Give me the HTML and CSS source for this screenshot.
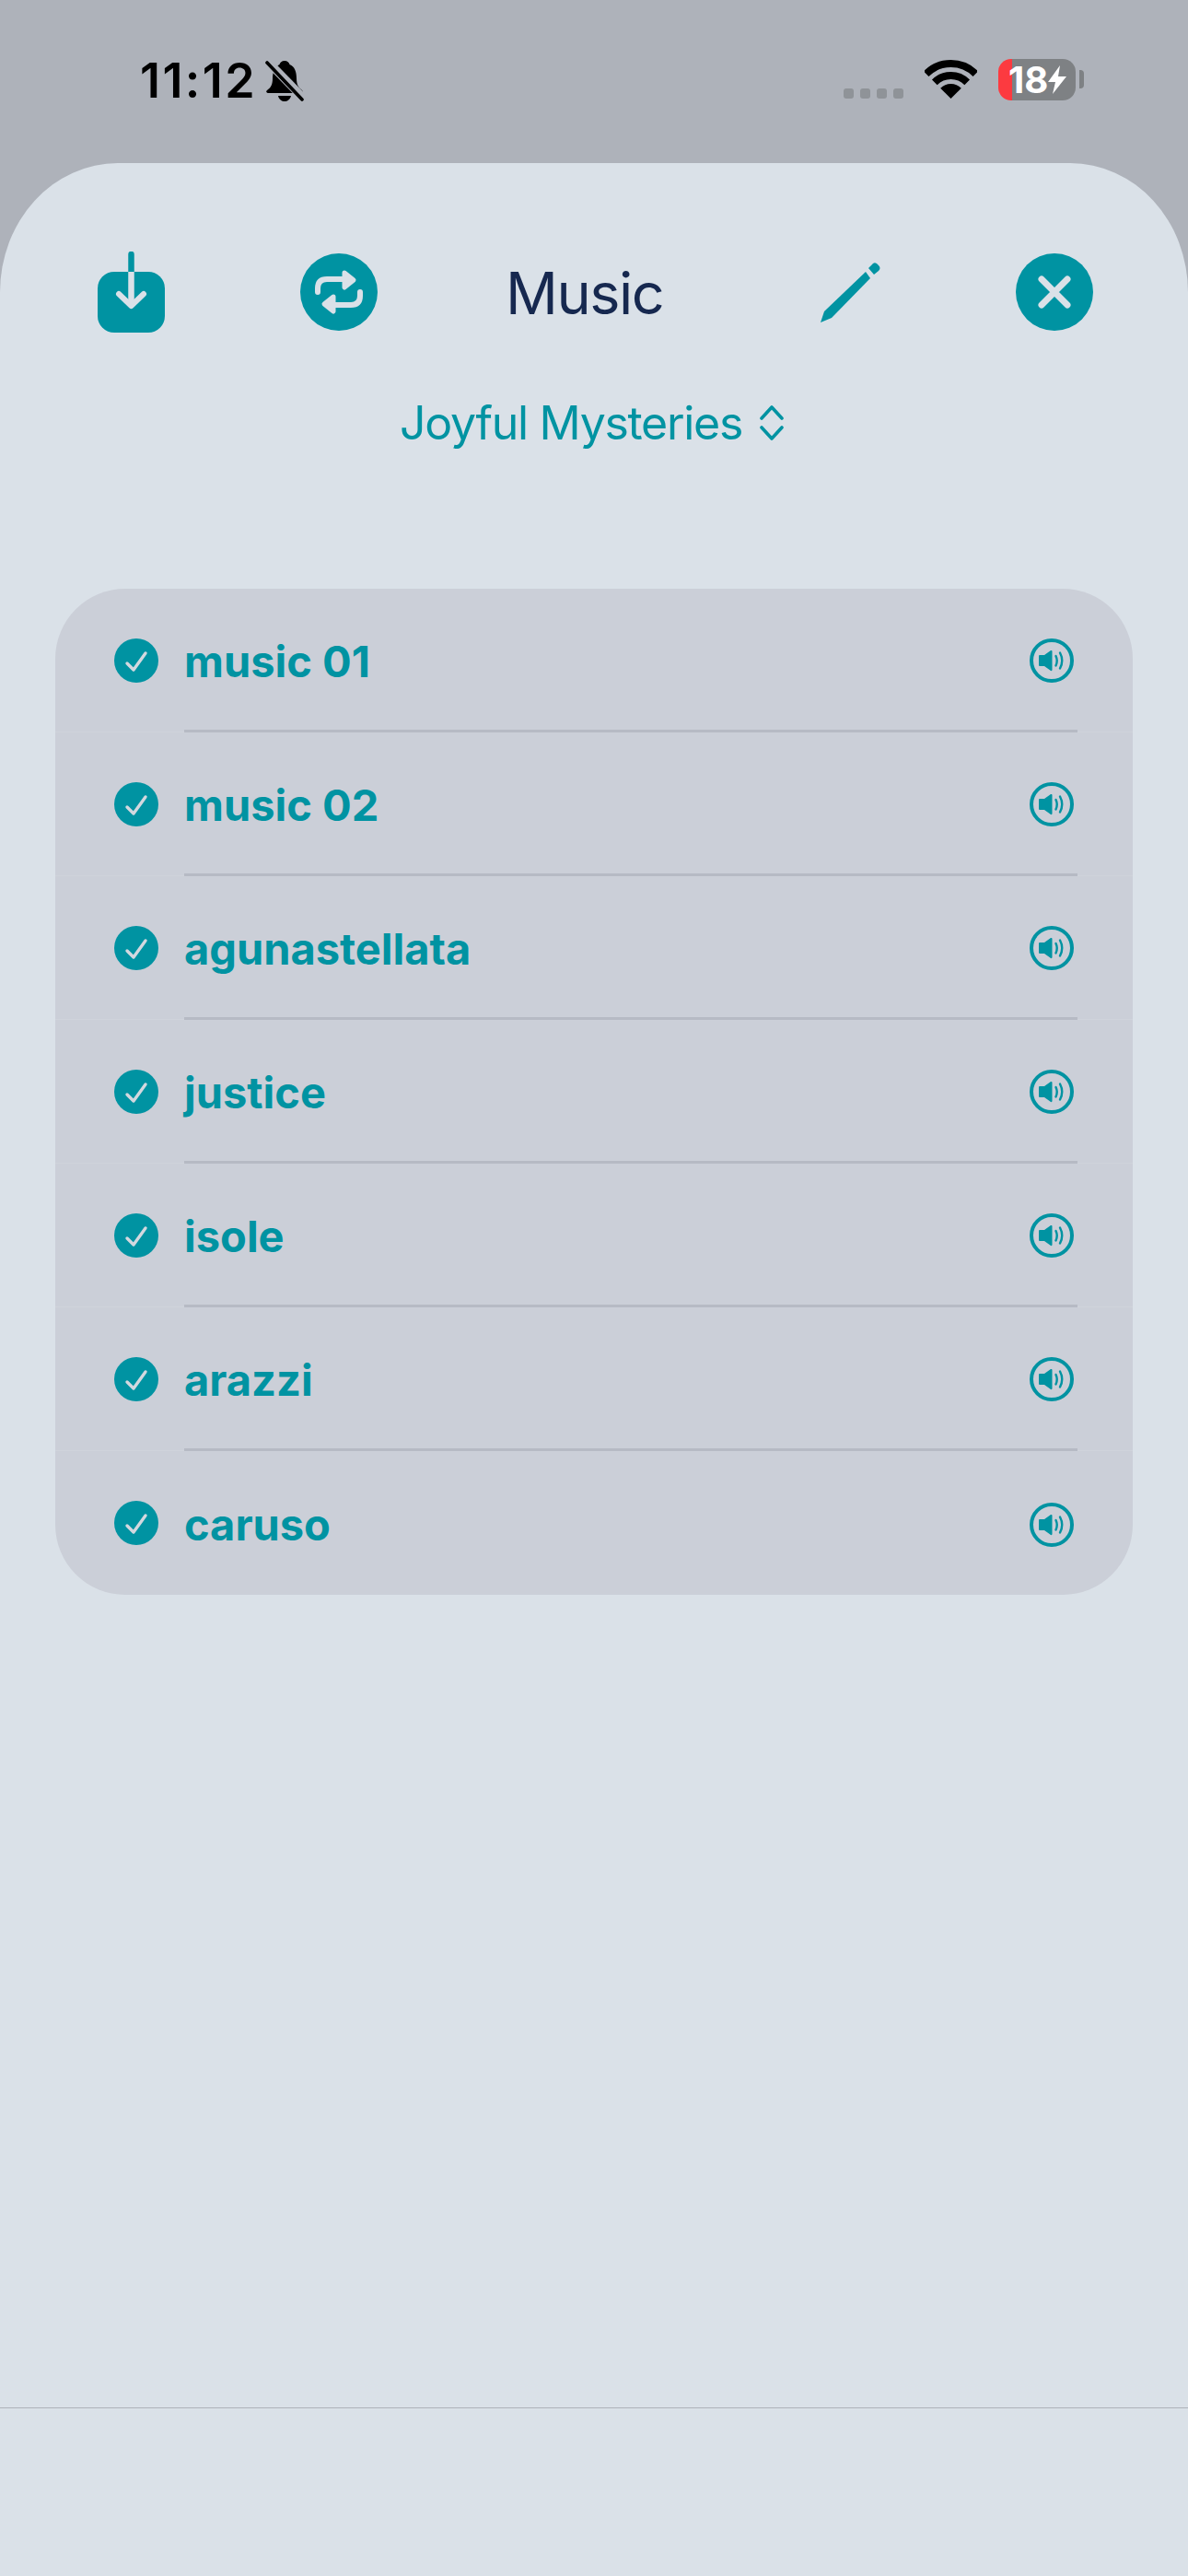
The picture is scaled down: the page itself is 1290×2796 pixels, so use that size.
FILE: index.html
```html
<!DOCTYPE html>
<html>
<head>
	<meta charset="utf-8">
	<title>Music</title>
	<link rel="stylesheet" href="styles.css">
</head>
<body>

<svg class="defs" width="0" height="0">
	<symbol id="check" viewBox="0 0 48 48">
		<circle cx="24" cy="24" r="24" fill="#0093a2"/>
		<path d="M14 27 L21 34 L34 16" fill="none" stroke="#d3d8df" stroke-width="3.4" stroke-linecap="round" stroke-linejoin="round"/>
	</symbol>
	<symbol id="speaker" viewBox="0 0 48 48">
		<circle cx="24" cy="24" r="22" fill="none" stroke="#0093a2" stroke-width="4"/>
		<path d="M11 18 H16 L23 13 Q24.5 12.5 24.5 14 V34 Q24.5 35.5 23 35 L16 30 H11 Q10 30 10 29 V19 Q10 18 11 18 Z" fill="#0093a2"/>
		<path d="M28.5 19 Q31 24 28.5 29.5" fill="none" stroke="#0093a2" stroke-width="2.4" stroke-linecap="round"/>
		<path d="M33 15.5 Q37.5 24 33 32.5" fill="none" stroke="#0093a2" stroke-width="2.4" stroke-linecap="round"/>
	</symbol>
</svg>

<div class="status">
	<span class="time">11:12</span>
	<svg class="bell" width="42" height="46" viewBox="0 0 42 46">
		<path d="M21 1 C24 1 26 3 26.5 5 C32 7 34 13 34 20 C34 27 36 30 40 33 C41.5 35 41 36 38 36 L4 36 C1 36 .5 34 2 33 C6 30 8 27 8 20 C8 13 11 7 15.5 5 C16 3 18 1 21 1 Z"/>
		<path d="M14 39 H28 C27 43 24 45 21 45 C18 45 15 43 14 39 Z"/>
		<line x1="2" y1="1" x2="41" y2="41" stroke="#aeb2ba" stroke-width="9"/>
		<line x1="2" y1="3" x2="40" y2="43" stroke="#000" stroke-width="3.6" stroke-linecap="round"/>
	</svg>
	<div class="status-right">
		<div class="signal"><i></i><i></i><i></i><i></i></div>
		<svg class="wifi" width="57" height="42" viewBox="0 0 57 42">
			<path d="M1.63 15.13 A38 38 0 0 1 55.37 15.13" fill="none" stroke="#000" stroke-width="8"/>
			<path d="M10.82 24.32 A25 25 0 0 1 46.18 24.32" fill="none" stroke="#000" stroke-width="8"/>
			<path d="M28.5 42 L17.2 30.7 A16 16 0 0 1 39.8 30.7 Z"/>
		</svg>
		<div class="battery">
			<span>18</span>
			<svg width="20" height="31" viewBox="0 0 20 31"><path d="M13 0 L0 18 H8 L5 31 L20 12 H11 Z" fill="#fff"/></svg>
		</div>
		<i class="nub"></i>
	</div>
</div>

<div class="sheet">

	<div class="toolbar">
		<svg class="tool-save" width="73" height="88" viewBox="0 0 73 88">
			<rect x="0" y="22" width="73" height="66" rx="18" fill="#0093a2"/>
			<path d="M36.5 3 V22" stroke="#0093a2" stroke-width="6.5" stroke-linecap="round"/>
			<path d="M36.5 22 V57" stroke="#dae1e8" stroke-width="6.5"/>
			<path d="M23 46 L36.5 59 L50 46" fill="none" stroke="#dae1e8" stroke-width="6" stroke-linecap="round" stroke-linejoin="round"/>
		</svg>
		<svg class="tool-repeat" width="84" height="84" viewBox="0 0 84 84">
			<circle cx="42" cy="42" r="42" fill="#0093a2"/>
			<path d="M19 42 V38 Q19 28 29 28 H48" fill="none" stroke="#dae1e8" stroke-width="6" stroke-linecap="round"/>
			<path d="M48 21 L58 29 L48 37 Z" fill="#dae1e8" stroke="#dae1e8" stroke-width="5" stroke-linejoin="round"/>
			<path d="M65 42 V46 Q65 56 55 56 H36" fill="none" stroke="#dae1e8" stroke-width="6" stroke-linecap="round"/>
			<path d="M36 47 L26 55 L36 63 Z" fill="#dae1e8" stroke="#dae1e8" stroke-width="5" stroke-linejoin="round"/>
		</svg>
		<h1 class="title">Music</h1>
		<svg class="tool-edit" width="65" height="65" viewBox="0 0 65 65">
			<path d="M0 65 L4 53 L49 10 L54 17 L12 60 Z" fill="#0093a2"/>
			<path d="M52 6 L57 1 Q60 -1 63 3 Q66 6 63 9 L58 13 Z" fill="#0093a2"/>
		</svg>
		<svg class="tool-close" width="84" height="84" viewBox="0 0 84 84">
			<circle cx="42" cy="42" r="42" fill="#0093a2"/>
			<path d="M28 28 L56 56 M56 28 L28 56" stroke="#dae1e8" stroke-width="7" stroke-linecap="round"/>
		</svg>
	</div>

	<div class="picker">
		<span>Joyful Mysteries</span>
		<svg width="26" height="38" viewBox="0 0 26 38">
			<path d="M2 14 L13 2 L24 14 M2 24 L13 36 L24 24" fill="none" stroke="#0093a2" stroke-width="3.6" stroke-linecap="round" stroke-linejoin="round"/>
		</svg>
	</div>

	<ul class="tracks">
		<li class="track">
			<svg class="check" width="48" height="48"><use href="#check"/></svg>
			<div class="track-body">
				<span class="track-name">music 01</span>
				<svg class="speaker" width="48" height="48"><use href="#speaker"/></svg>
			</div>
		</li>
		<li class="track">
			<svg class="check" width="48" height="48"><use href="#check"/></svg>
			<div class="track-body">
				<span class="track-name">music 02</span>
				<svg class="speaker" width="48" height="48"><use href="#speaker"/></svg>
			</div>
		</li>
		<li class="track">
			<svg class="check" width="48" height="48"><use href="#check"/></svg>
			<div class="track-body">
				<span class="track-name">agunastellata</span>
				<svg class="speaker" width="48" height="48"><use href="#speaker"/></svg>
			</div>
		</li>
		<li class="track">
			<svg class="check" width="48" height="48"><use href="#check"/></svg>
			<div class="track-body">
				<span class="track-name">justice</span>
				<svg class="speaker" width="48" height="48"><use href="#speaker"/></svg>
			</div>
		</li>
		<li class="track">
			<svg class="check" width="48" height="48"><use href="#check"/></svg>
			<div class="track-body">
				<span class="track-name">isole</span>
				<svg class="speaker" width="48" height="48"><use href="#speaker"/></svg>
			</div>
		</li>
		<li class="track">
			<svg class="check" width="48" height="48"><use href="#check"/></svg>
			<div class="track-body">
				<span class="track-name">arazzi</span>
				<svg class="speaker" width="48" height="48"><use href="#speaker"/></svg>
			</div>
		</li>
		<li class="track">
			<svg class="check" width="48" height="48"><use href="#check"/></svg>
			<div class="track-body">
				<span class="track-name">caruso</span>
				<svg class="speaker" width="48" height="48"><use href="#speaker"/></svg>
			</div>
		</li>
	</ul>

	<div class="bottom-line"></div>

</div>

</body>
</html>
```
FILE: styles.css
```css
* {
	box-sizing: border-box;
}

html, body {
	margin: 0;
	padding: 0;
}

body {
	width: 1290px;
	height: 2796px;
	overflow: hidden;
	background-color: #aeb2ba;
	font-family: Inter, "Liberation Sans", sans-serif;
}

.defs {
	display: block;
	height: 0;
}

/* status bar */
.status {
	display: flex;
	align-items: flex-start;
	height: 177px;
	padding-left: 152px;
}

.time {
	margin-top: 57px;
	font-size: 52px;
	line-height: 62px;
	font-weight: 600;
	letter-spacing: 2.4px;
	color: #000;
}

.bell {
	margin-top: 65px;
	margin-left: 9px;
}

.status-right {
	display: flex;
	margin-left: auto;
	margin-right: 113px;
	padding-top: 64px;
}

.signal {
	display: flex;
	gap: 7px;
	margin-top: 32px;
	height: 11px;
}

.signal i {
	display: block;
	width: 11px;
	height: 11px;
	border-radius: 3px;
	background-color: #8f9398;
}

.wifi {
	margin-top: 1px;
	margin-left: 23px;
}

.battery {
	display: flex;
	align-items: center;
	width: 84px;
	height: 45px;
	margin-left: 23px;
	padding-left: 11px;
	border-radius: 14px;
	background: linear-gradient(to right, #fc3a40 15px, #7e8184 15px);
	color: #fff;
	font-size: 40px;
	font-weight: 700;
}

.nub {
	display: block;
	width: 5px;
	height: 20px;
	margin-top: 12px;
	margin-left: 4px;
	border-radius: 0 4px 4px 0;
	background-color: #7e8184;
}

/* sheet */
.sheet {
	height: 2619px;
	padding-top: 96px;
	border-radius: 128px 128px 0 0 / 140px 140px 0 0;
	background-color: #dae1e8;
}

.toolbar {
	display: flex;
	align-items: center;
	height: 88px;
	padding-left: 106px;
}

.tool-repeat {
	margin-left: 147px;
}

.title {
	margin: 2px 0 0 139px;
	width: 170px;
	font-size: 63px;
	line-height: 88px;
	font-weight: 400;
	letter-spacing: -1.5px;
	color: #16284f;
	white-space: nowrap;
}

.tool-edit {
	margin-left: 172px;
}

.tool-close {
	margin-left: 147px;
}

.picker {
	display: flex;
	align-items: center;
	justify-content: center;
	gap: 19px;
	margin-top: 66px;
	height: 64px;
	padding-right: 5px;
	font-size: 50px;
	letter-spacing: -1.3px;
	color: #0093a2;
}

/* list */
.tracks {
	list-style: none;
	margin: 148px 60px 0;
	padding: 0;
	border-radius: 76px;
	background-color: #cbcfd8;
	overflow: hidden;
}

.track {
	display: flex;
	align-items: center;
	height: 156px;
	padding-left: 64px;
	padding-right: 60px;
	box-shadow: inset 0 -1px 0 #cfd3db;
}

.track:last-child {
	box-shadow: none;
}

.check {
	flex: none;
	margin-right: 28px;
}

.track-body {
	display: flex;
	flex: 1;
	align-items: center;
	justify-content: space-between;
	height: 156px;
	padding-top: 3px;
	padding-right: 4px;
	border-bottom: 3px solid #b6bac4;
}

.track:last-child .track-body {
	border-bottom: 0;
}

.track-name {
	font-size: 47px;
	font-weight: 700;
	color: #0093a2;
}

.bottom-line {
	height: 1px;
	margin-top: 882px;
	background-color: #aeb2ba;
}
```
